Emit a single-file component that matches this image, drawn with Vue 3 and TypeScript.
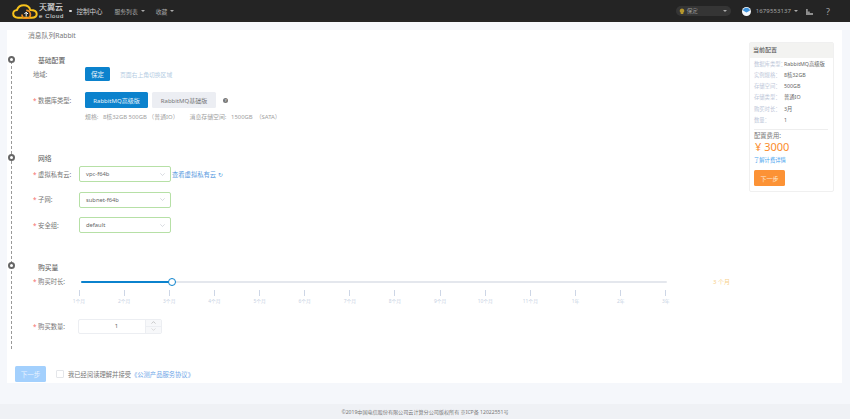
<script setup lang="ts">
const months: string[] = ['1个月','2个月','3个月','4个月','5个月','6个月','7个月','8个月','9个月','10个月','11个月','1年','2年','3年']
const summary: [string, string][] = [
  ['数据库类型：', 'RabbitMQ高级版'],
  ['实例规格：', '8核32GB'],
  ['存储空间：', '500GB'],
  ['存储类型：', '普通IO'],
  ['购买时长：', '3月'],
  ['数量：', '1'],
]
const selects = [
  { label: '虚拟私有云:', value: 'vpc-f64b', link: true },
  { label: '子网:', value: 'subnet-f64b', link: false },
  { label: '安全组:', value: 'default', link: false },
]
</script>

<template>
  <div class="page">
    <header class="top">
      <div class="logo">
        <svg width="26" height="15" viewBox="0 0 26 15">
          <path d="M6 13.700C3 13.700 1.200 11.900 1.200 9.600 1.200 7.500 3 6 5 5.900 6 3 8.800 1.200 11.800 1.200c3.400 0 5.800 2 6.500 4.800 3.300 0 6.400 1.300 6.400 4 0 2.400-2.200 3.700-5 3.700H6z" fill="none" stroke="#f6c21c" stroke-width="2"/>
          <path d="M10 10.500a4.200 4.200 0 1 0 4.200-4.200" fill="none" stroke="#ee8a1e" stroke-width="1.800"/>
          <path d="M14.200 12.500V8.300M12.400 10l1.800-1.800L16 10" fill="none" stroke="#fff" stroke-width="1"/>
        </svg>
        <div class="brand"><span class="cn">天翼云</span><span class="en">e Cloud</span></div>
      </div>
      <i class="dot"></i>
      <span class="console">控制中心</span>
      <span class="menu first">服务列表<i class="caret"></i></span>
      <span class="menu second">收藏<i class="caret"></i></span>
      <div class="spacer"></div>
      <div class="region">
        <svg width="6" height="7" viewBox="0 0 6 7"><path d="M3 .5a2.300 2.300 0 0 1 1.300 4.200V6H1.700V4.700A2.300 2.300 0 0 1 3 .5z" fill="#b5972d"/></svg>
        <span>保定</span><i class="caret"></i>
      </div>
      <svg class="avatar" width="9" height="9" viewBox="0 0 9 9">
        <circle cx="4.500" cy="4.500" r="4.500" fill="#f3f7fb"/>
        <path d="M1 3.500a3.600 3.600 0 0 1 7 0l-3.500 2z" fill="#3d93dd"/>
      </svg>
      <span class="uid">1679553137</span><i class="caret uid-caret"></i>
      <svg class="chart" width="7" height="7" viewBox="0 0 7 7"><path d="M0 1h1.800v6H0zM1.800 3.500h2V7h-2zM3.800 5H7v2H3.800z" fill="#8e8e8e"/></svg>
      <span class="help">?</span>
    </header>

    <main class="content">
      <section class="panel">
        <div class="form">
          <h1 class="title">消息队列Rabbit</h1>
          <div class="rail">
            <i class="node n1"></i><i class="node n2"></i><i class="node n3"></i>

            <h2 class="sec basic">基础配置</h2>
            <div class="row region-row">
              <label class="lab">地域:</label>
              <span class="btn primary small">保定</span>
              <span class="hint">页面右上角切换区域</span>
            </div>
            <div class="row db-row">
              <label class="lab"><b>*</b> 数据库类型:</label>
              <span class="btn primary big">RabbitMQ高级版</span>
              <span class="btn plain big">RabbitMQ基础版</span>
              <span class="q">?</span>
            </div>
            <p class="spec"><span>规格:&nbsp;&nbsp;&nbsp;8核32GB 500GB （普通IO）</span><span>消息存储空间:&nbsp;&nbsp;&nbsp;1500GB &nbsp;（SATA）</span></p>

            <h2 class="sec net">网络</h2>
            <div v-for="s in selects" :key="s.value" class="row sel-row">
              <label class="lab"><b>*</b> {{ s.label }}</label>
              <div class="select">
                <span>{{ s.value }}</span>
                <svg width="5" height="3" viewBox="0 0 5 3"><path d="M.3.3l2.200 2.200L4.700.3" fill="none" stroke="#c0c4cc" stroke-width=".6"/></svg>
              </div>
              <span v-if="s.link" class="link">查看虚拟私有云 <span class="refresh">↻</span></span>
            </div>

            <h2 class="sec buy">购买量</h2>
            <div class="row slider-row">
              <label class="lab"><b>*</b> 购买时长:</label>
              <div class="slider">
                <div class="track"><div class="fill"></div><i class="thumb"></i></div>
                <div class="ticks">
                  <div v-for="m in months" :key="m" class="tick"><i></i><span>{{ m }}</span></div>
                </div>
              </div>
              <span class="dur">3 个月</span>
            </div>
            <div class="row qty-row">
              <label class="lab"><b>*</b> 购买数量:</label>
              <div class="num">
                <span class="val">1</span>
                <div class="step">
                  <span><svg width="5" height="3" viewBox="0 0 5 3"><path d="M.5 2.600L2.500.6l2 2" fill="none" stroke="#b5b5b5" stroke-width=".7"/></svg></span>
                  <span><svg width="5" height="3" viewBox="0 0 5 3"><path d="M.5.4l2 2 2-2" fill="none" stroke="#cfcfcf" stroke-width=".7"/></svg></span>
                </div>
              </div>
            </div>
          </div>
          <div class="foot">
            <span class="btn next">下一步</span>
            <i class="check"></i>
            <span class="agree">我已经阅读理解并接受</span>
            <span class="agree-link">《公测产品服务协议》</span>
          </div>
        </div>

        <aside class="card">
          <div class="card-head">当前配置</div>
          <div class="card-body">
            <div v-for="r in summary" :key="r[0]" class="sum"><span>{{ r[0] }}</span><em>{{ r[1] }}</em></div>
            <hr />
            <div class="fee">配置费用:</div>
            <div class="price">¥ 3000</div>
            <div class="detail">了解计费详情</div>
            <span class="btn order">下一步</span>
          </div>
        </aside>
      </section>
    </main>

    <footer class="bottom">©2019中国电信股份有限公司云计算分公司版权所有 京ICP备 12022551号</footer>
  </div>
</template>

<style>
html, body { margin: 0; background: #f5f7fb; }
</style>

<style scoped>
.page { height: 419px; width: 850px; display: flex; flex-direction: column; overflow: hidden; font-family: "Noto Sans", "Noto Sans CJK SC", sans-serif; font-size: 6.500px; color: #666; background: #f5f7fb; }
i { display: block; font-style: normal; }
h1, h2, p { margin: 0; font-weight: 400; }

.top { height: 22px; flex: none; background: #242424; display: flex; align-items: center; color: #b5b5b5; }
.logo { display: flex; align-items: center; margin-left: 12px; width: 54px; gap: 1px; }
.brand { display: flex; flex-direction: column; color: #e8e8e8; font-family: "Liberation Sans", "Noto Sans CJK SC", sans-serif; }
.brand .cn { font-size: 8px; line-height: 9px; white-space: nowrap; }
.brand .en { font-size: 6px; line-height: 6px; margin-top: 1px; letter-spacing: .6px; white-space: nowrap; }
.dot { width: 2.500px; height: 2.500px; border-radius: 50%; background: #ddd; margin-left: 3px; }
.console { font-size: 6.500px; margin-left: 5px; color: #d0d0d0; white-space: nowrap; }
.menu { display: flex; align-items: center; gap: 3px; color: #a8a8a8; font-size: 5.800px; white-space: nowrap; }
.menu.first { margin-left: 12px; }
.menu.second { margin-left: 11px; }
.caret { width: 0; height: 0; border: 2px solid transparent; border-top-color: #aaa; border-bottom: 0; }
.spacer { flex: 1; }
.region { width: 55px; height: 10px; background: #353535; border-radius: 5px; display: flex; align-items: center; box-sizing: border-box; padding: 0 4px 0 3px; gap: 2px; color: #999; font-size: 5.500px; }
.region .caret { margin-left: auto; }
.avatar { margin-left: 11px; }
.uid { margin-left: 5px; font-size: 6px; color: #a5a5a5; letter-spacing: .1px; }
.uid-caret { margin-left: 3px; }
.chart { margin-left: 8px; }
.help { margin-left: 13px; margin-right: 20px; color: #a5a5a5; font-size: 9px; }

.content { flex: 1; padding: 8px 8px 21px 7px; min-height: 0; }
.panel { height: 353px; background: #fff; display: flex; }
.form { width: 742px; flex: none; }
.title { font-size: 6.800px; height: 10px; line-height: 10px; margin: 1px 0 0 21px; color: #777; }
.rail { position: relative; margin: 15px 0 0 4px; height: 293px; border-left: 1px dashed #999; box-sizing: border-box; }
.node { position: absolute; left: -4.500px; width: 7px; height: 7px; box-sizing: border-box; border: 2px solid #666; border-radius: 50%; background: #fff; }
.n1 { top: 0; }
.n2 { top: 98px; }
.n3 { top: 206px; }

.sec { font-size: 6.800px; line-height: 10px; margin-left: 26px; color: #555; }
.row { display: flex; align-items: center; }
.lab { flex: none; margin-left: 21px; white-space: nowrap; color: #777; font-size: 6.300px; }
.lab b { color: #f56c6c; font-weight: 400; }
.btn { display: flex; align-items: center; justify-content: center; border-radius: 1.500px; flex: none; white-space: nowrap; box-sizing: border-box; }
.primary { background: #0b82cd; color: #e9f3fa; }
.plain { background: #eceef3; color: #777; }
.small { width: 25px; height: 14px; }
.big { width: 63px; height: 16px; font-size: 6px; }
.plain.big { width: 64px; margin-left: 4px; }
.region-row { margin-top: 1px; height: 14px; }
.region-row .lab { width: 52px; }
.hint { margin-left: 10px; color: #b5cde3; font-size: 5.800px; white-space: nowrap; }
.db-row { margin-top: 11px; height: 16px; }
.db-row .lab { width: 52px; }
.q { width: 5px; height: 5px; border-radius: 50%; background: #777; color: #fff; font-size: 4px; line-height: 5px; text-align: center; margin-left: 7px; }
.spec { display: flex; gap: 11px; margin: 4px 0 0 73px; height: 10px; line-height: 10px; color: #a0a0a0; font-size: 5.900px; white-space: nowrap; }
.sec.net { margin-top: 32px; }
.sel-row { height: 16px; margin-bottom: 9.500px; }
.sel-row .lab { width: 46px; }
.sec.net + .sel-row { margin-top: 2px; }
.select { width: 92px; height: 16px; border: 1px solid #b6e0a6; border-radius: 2px; box-sizing: border-box; display: flex; align-items: center; justify-content: space-between; padding: 0 5px 0 6px; font-size: 5.800px; color: #666; }
.link { margin-left: 1px; color: #5b9be0; font-size: 6.300px; white-space: nowrap; }
.refresh { font-size: 6px; }
.sec.buy { margin-top: 29.500px; }
.slider-row { align-items: flex-start; height: 36px; margin-top: 5px; }
.slider-row .lab { width: 46px; line-height: 8px; }
.slider { width: 586px; margin-left: 2px; flex: none; }
.track { height: 2.500px; margin-top: 3px; background: #e4e7ed; position: relative; border-radius: 2px; }
.fill { width: 90.700px; height: 100%; background: #0b82cd; border-radius: 2px; }
.thumb { position: absolute; left: 86.700px; top: -2.800px; width: 8px; height: 8px; box-sizing: border-box; border: 1.200px solid #0b82cd; border-radius: 50%; background: #fff; }
.ticks { display: flex; justify-content: space-between; margin: 7px 0 0 -2px; width: 587px; }
.tick { width: 0; display: flex; flex-direction: column; align-items: center; }
.tick i { width: 1px; height: 6px; flex: none; background: #cdd6e6; }
.tick span { margin-top: 1.500px; font-size: 4.800px; line-height: 7px; color: #c6d0e2; white-space: nowrap; }
.dur { margin-left: 46px; color: #f7d08a; font-size: 6px; line-height: 8px; white-space: nowrap; }
.qty-row { margin-top: 5px; height: 15px; }
.qty-row .lab { width: 45px; }
.num { width: 84px; height: 15px; box-sizing: border-box; border: 1px solid #eceef2; border-radius: 2px; display: flex; }
.val { flex: 1; padding-left: 9px; text-align: center; line-height: 13px; font-size: 6px; color: #666; }
.step { width: 15px; border-left: 1px solid #eceef2; display: flex; flex-direction: column; }
.step span { flex: 1; background: #f7f8fa; display: flex; align-items: center; justify-content: center; border-bottom: 1px solid #eceef2; box-sizing: border-box; }
.step span:last-child { border-bottom: 0; }

.foot { display: flex; align-items: center; margin: 17px 0 0 8px; height: 16px; }
.next { width: 31px; height: 16px; background: #a3d0fd; color: #e8f3ff; }
.check { width: 6px; height: 6px; border: 1px solid #e4e6ea; border-radius: 1px; margin-left: 10px; }
.agree { margin-left: 4px; color: #777; font-size: 6.300px; white-space: nowrap; }
.agree-link { color: #6ea6e8; font-size: 6.300px; white-space: nowrap; }

.card { width: 85px; height: 150px; margin-top: 12px; flex: none; box-sizing: border-box; border: 1px solid #f0f0f0; border-radius: 2px; background: #fff; }
.card-head { height: 15px; line-height: 15px; background: #f3f3f1; padding-left: 3px; color: #444; font-size: 6px; }
.card-body { padding: .5px 5px 0 4px; }
.sum { height: 11.300px; line-height: 11.300px; display: flex; font-size: 5.300px; white-space: nowrap; color: #bcc6d8; }
.sum span { width: 30px; flex: none; }
.sum em { font-style: normal; color: #666; }
hr { border: 0; border-top: 1px solid #eee; margin: 3px 0 0; }
.fee { font-size: 6.300px; line-height: 10px; margin-top: 1px; color: #777; }
.price { font-size: 11px; line-height: 12px; color: #fb8c2b; margin: 0 0 0 1px; white-space: nowrap; }
.detail { font-size: 5.300px; line-height: 8px; margin-top: 3px; color: #3fa2ee; }
.order { width: 31px; height: 15.500px; margin-top: 6px; background: #fc9235; color: #fde9d6; font-size: 6px; }

.bottom { height: 15px; flex: none; line-height: 16px; background: #eff1f5; text-align: center; font-size: 5.100px; color: #777; white-space: nowrap; }
</style>
